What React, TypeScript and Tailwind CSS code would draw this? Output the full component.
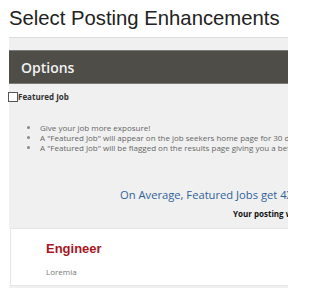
export default function App() {
  return (
    <div className="w-[288px] h-[288px] overflow-hidden bg-white font-['Open_Sans',sans-serif]">
      <h1 className="pl-[9px] pt-[3px] h-[37px] text-[20.3px] leading-[30px] text-[#222] whitespace-nowrap font-['Liberation_Sans',Arial,sans-serif]">
        Select Posting Enhancements
      </h1>

      <div className="ml-[9px] w-[420px] bg-[#f0f0f0] border-t border-[#dcdcdc] pt-[12px] pb-[8px]">
        <div className="h-[34px] flex items-center pl-[12px] bg-[#4f4d48] border-y border-[#7a7a78]">
          <span className="text-[14px] font-semibold text-[#f2f2f2]">Options</span>
        </div>

        <label className="flex items-center h-[17px] mt-[4px] -ml-[1px]">
          <input type="checkbox" className="w-[10px] h-[10px] m-0 appearance-none border border-[#555] bg-white" />
          <span className="text-[8px] font-bold text-[#333]">Featured Job</span>
        </label>

        <ul className="mt-[18px] pl-[31px] list-disc text-[8px] leading-[10px] text-[#666] whitespace-nowrap marker:text-[#888]">
          <li>Give your job more exposure!</li>
          <li>A "Featured Job" will appear on the job seekers home page for 30 days</li>
          <li>A "Featured Job" will be flagged on the results page giving you a better chance</li>
        </ul>

        <p className="mt-[33px] pl-[111px] text-[11.2px] leading-[18px] text-[#31629a] whitespace-nowrap">
          On Average, Featured Jobs get 4X more views
        </p>
        <p className="mt-[4px] pl-[224px] text-[8px] leading-[12px] font-bold text-[#111] whitespace-nowrap">
          Your posting will be featured
        </p>
      </div>

      <div className="ml-[10px] w-[420px] h-[58px] bg-white border border-[#e6e6e6] pl-[35px] pt-[12px]">
        <div className="text-[13px] leading-[16px] font-bold text-[#a5161f] font-['Liberation_Sans',Arial,sans-serif]">
          Engineer
        </div>
        <div className="mt-[9px] text-[8px] leading-[12px] text-[#777]">Loremia</div>
      </div>
      <div className="ml-[9px] w-[420px] h-[10px] bg-[#f0f0f0]" />
    </div>
  );
}
